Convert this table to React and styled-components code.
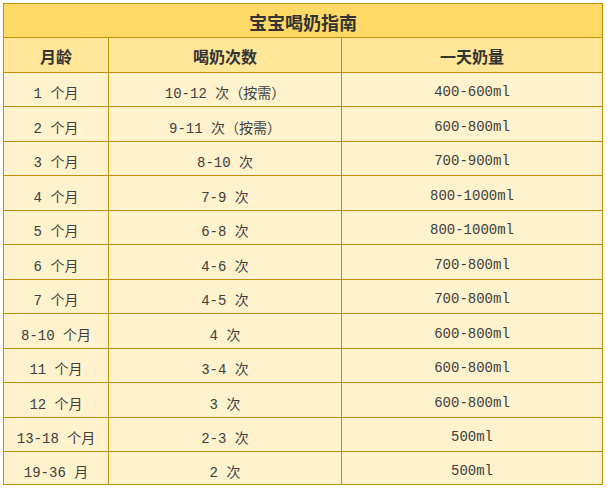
import React from "react";
import styled, { createGlobalStyle } from "styled-components";

const GlobalStyle = createGlobalStyle`
  body {
    margin: 0;
    background: #ffffff;
    font-family: "Noto Sans CJK SC", "Noto Sans", sans-serif;
  }
`;

const Page = styled.div`
  padding: 3px;
`;

const Sheet = styled.div`
  width: 598px;
  display: flex;
  flex-direction: column;
  gap: 1px;
  padding: 1px;
  background: #bf9000;
`;

const Row = styled.div`
  display: grid;
  grid-template-columns: ${({ $span }) => ($span ? "1fr" : "104px 232px 260px")};
  gap: 1px;
  height: ${({ $h }) => $h}px;
`;

const Cell = styled.div`
  display: flex;
  align-items: center;
  justify-content: center;
  background: ${({ $bg }) => $bg};
  color: #333333;
  white-space: nowrap;
  box-sizing: border-box;
`;

const Title = styled(Cell)`
  font-size: 18px;
  font-weight: 700;
  padding-top: 3px;
`;

const Head = styled(Cell)`
  font-size: 16px;
  font-weight: 700;
  padding-top: 2px;
`;

const Body = styled(Cell)`
  font-family: "Liberation Mono", "Noto Sans CJK SC", monospace;
  font-size: 14px;
  color: #404040;
  padding-top: 5px;
`;

const rows = [
  ["1 个月", "10-12 次（按需）", "400-600ml"],
  ["2 个月", "9-11 次（按需）", "600-800ml"],
  ["3 个月", "8-10 次", "700-900ml"],
  ["4 个月", "7-9 次", "800-1000ml"],
  ["5 个月", "6-8 次", "800-1000ml"],
  ["6 个月", "4-6 次", "700-800ml"],
  ["7 个月", "4-5 次", "700-800ml"],
  ["8-10 个月", "4 次", "600-800ml"],
  ["11 个月", "3-4 次", "600-800ml"],
  ["12 个月", "3 次", "600-800ml"],
  ["13-18 个月", "2-3 次", "500ml"],
  ["19-36 月", "2 次", "500ml"],
];

const heights = [33, 34, 33, 34, 33, 34, 33, 34, 33, 34, 33, 32];

export default function App() {
  return (
    <Page>
      <GlobalStyle />
      <Sheet>
        <Row $span $h={33}>
          <Title $bg="#ffd966">宝宝喝奶指南</Title>
        </Row>
        <Row $h={34}>
          <Head $bg="#ffe699">月龄</Head>
          <Head $bg="#ffe699">喝奶次数</Head>
          <Head $bg="#ffe699">一天奶量</Head>
        </Row>
        {rows.map((r, i) => (
          <Row key={i} $h={heights[i]}>
            {r.map((t, j) => (
              <Body key={j} $bg="#fff2cc">
                {t}
              </Body>
            ))}
          </Row>
        ))}
      </Sheet>
    </Page>
  );
}
